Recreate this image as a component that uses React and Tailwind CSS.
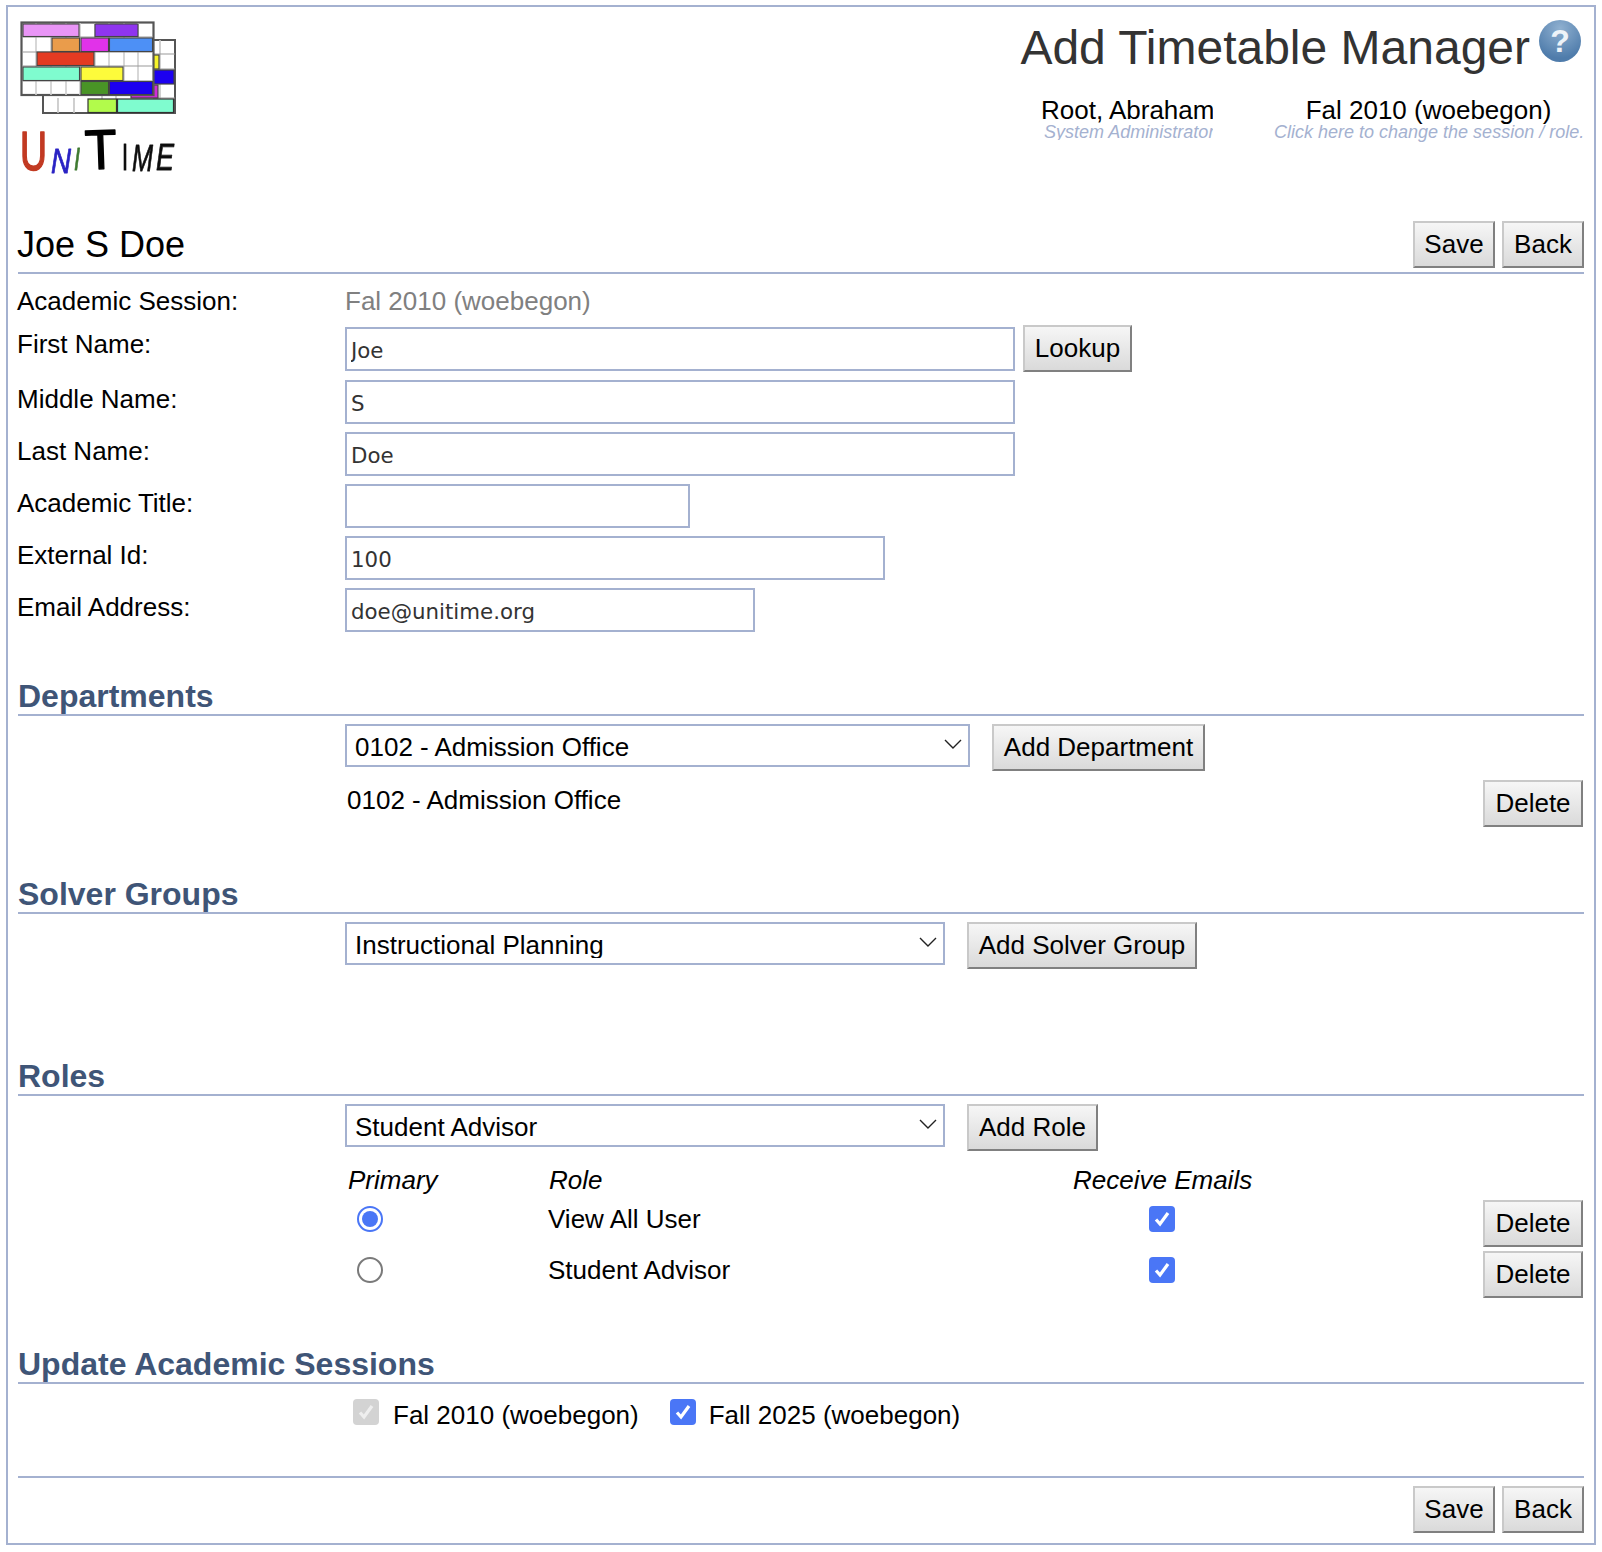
import React from 'react';

const SANS = 'font-["Liberation_Sans",Arial,sans-serif]';

const Btn = ({ children, className = '' }) => (
  <button
    type="button"
    className={`h-[47px] shrink-0 border-2 border-t-[#c9c9c9] border-l-[#c9c9c9] border-r-[#808080] border-b-[#808080] bg-gradient-to-b from-[#f6f6f6] to-[#dadada] pb-[1px] text-[26px] leading-none text-black ${className}`}
  >
    {children}
  </button>
);

const Field = ({ label, value = '', width, height = 'h-[52px]', top = 'pt-[4px]', children }) => (
  <div className={`grid grid-cols-[327px_1fr] ${height} items-start`}>
    <div className={`${top} -ml-[1px] text-[26px] leading-[30px]`}>{label}</div>
    <div className="flex items-center gap-2">
      <input
        type="text"
        defaultValue={value}
        className={`${width} h-[44px] border-2 border-[#a4b1d0] pl-[4px] pt-[2px] font-["DejaVu_Sans",sans-serif] text-[21.33px] text-[#333] outline-none`}
      />
      {children}
    </div>
  </div>
);

const Section = ({ title, className = '', children }) => (
  <section className={className}>
    <h2 className="flex h-[44px] items-end border-b-2 border-[#a4b1d0] text-[32px] font-bold leading-[36px] text-[#3f5577]">
      {title}
    </h2>
    {children}
  </section>
);

const Dropdown = ({ value, width }) => (
  <div className={`relative ${width}`}>
    <select
      defaultValue={value}
      className="h-[43px] w-full appearance-none border-2 border-[#a4b1d0] bg-white pl-[8px] pt-[2px] text-[26px] leading-none text-black outline-none"
    >
      <option>{value}</option>
    </select>
    <svg className="pointer-events-none absolute right-[8px] top-[15px]" width="18" height="11" viewBox="0 0 18 11" fill="none">
      <path d="M1 1l8 8 8-8" stroke="#222" strokeWidth="1.4" />
    </svg>
  </div>
);

const CheckBox = ({ disabled = false, className = '' }) => (
  <span
    className={`flex h-[26px] w-[26px] shrink-0 items-center justify-center rounded-[4px] ${disabled ? 'bg-[#d3d3d3]' : 'bg-[#4a76f6]'} ${className}`}
  >
    <svg width="20" height="20" viewBox="0 0 20 20" fill="none">
      <path d="M4 10.5l4 4.5 8-11" stroke={disabled ? '#eeeeee' : '#fff'} strokeWidth="3.2" />
    </svg>
  </span>
);

const Radio = ({ checked = false }) =>
  checked ? (
    <span className="mt-[6px] ml-[12px] flex h-[26px] w-[26px] items-center justify-center rounded-full border-2 border-[#4a76f6]">
      <span className="h-[16px] w-[16px] rounded-full bg-[#4a76f6]" />
    </span>
  ) : (
    <span className="mt-[6px] ml-[12px] block h-[26px] w-[26px] rounded-full border-2 border-[#7a7a7a]" />
  );

const Logo = () => (
  <svg width="160" height="160" viewBox="18 18 160 160">
    <defs>
      <filter id="soft" x="-5%" y="-5%" width="110%" height="110%">
        <feGaussianBlur stdDeviation="0.5" />
      </filter>
    </defs>
    <g filter="url(#soft)">
      {/* back grid */}
      <rect x="43" y="38" width="132" height="73" fill="#fff" stroke="#555" strokeWidth="2" />
      {[160, 102, 116].map((x) => (
        <path key={x} d={`M${x} 38v73`} stroke="#c4c4c4" strokeWidth="1.6" />
      ))}
      {[58, 74].map((x) => (
        <path key={x} d={`M${x} 96v15`} stroke="#c4c4c4" strokeWidth="1.6" />
      ))}
      <path d="M153 52h22M153 67h22M153 96h22" stroke="#999" strokeWidth="1.2" />
      <rect x="153" y="53" width="6" height="14" fill="#f6f32a" stroke="#444" strokeWidth="1.2" />
      <rect x="153" y="68" width="21" height="14" fill="#1c00f0" stroke="#444" strokeWidth="1.2" />
      <rect x="131" y="83" width="27" height="13" fill="#d02bd8" stroke="#444" strokeWidth="1.2" />
      <rect x="88" y="97" width="28.5" height="13.5" fill="#b2fb4b" stroke="#333" strokeWidth="1.2" />
      <rect x="117.5" y="97" width="56" height="13.5" fill="#7ffccf" stroke="#333" strokeWidth="1.2" />
      {/* front grid */}
      <rect x="21.5" y="20.5" width="132" height="72.5" fill="#fff" stroke="#555" strokeWidth="2.2" />
      {[36, 51, 66, 80, 95, 109, 124, 138].map((x) => (
        <path key={x} d={`M${x} 21v72`} stroke="#cdcdcd" strokeWidth="1.6" />
      ))}
      {[35, 50, 64, 79].map((y) => (
        <path key={y} d={`M22 ${y}h131`} stroke="#999" strokeWidth="1.2" />
      ))}
      <rect x="23" y="22" width="56" height="12.5" fill="#e995f6" stroke="#444" strokeWidth="1.1" />
      <rect x="95" y="22" width="43" height="12.5" fill="#8f35ef" stroke="#444" strokeWidth="1.1" />
      <rect x="52" y="36" width="27.5" height="13.5" fill="#ea9c4b" stroke="#444" strokeWidth="1.1" />
      <rect x="81" y="36" width="27.5" height="13.5" fill="#e133e9" stroke="#444" strokeWidth="1.1" />
      <rect x="109.5" y="36" width="43" height="13.5" fill="#4e90f6" stroke="#444" strokeWidth="1.1" />
      <rect x="37" y="50" width="57" height="13.5" fill="#e43a22" stroke="#444" strokeWidth="1.1" />
      <rect x="23" y="65" width="56.5" height="13.5" fill="#7ffccf" stroke="#444" strokeWidth="1.1" />
      <rect x="81" y="65" width="42" height="13.5" fill="#fdfb3b" stroke="#444" strokeWidth="1.1" />
      <rect x="81" y="79.5" width="27.5" height="13" fill="#4a9428" stroke="#444" strokeWidth="1.1" />
      <rect x="109.5" y="79.5" width="43" height="13" fill="#1c00f0" stroke="#444" strokeWidth="1.1" />
    </g>
    <g fontFamily='"Liberation Sans", sans-serif' filter="url(#soft)" strokeLinejoin="round">
      <text x="20" y="168" fontSize="56" fill="#c23a22" stroke="#c23a22" strokeWidth="1.6" textLength="27" lengthAdjust="spacingAndGlyphs">U</text>
      <text x="51" y="171" fontSize="35" fill="#2a22c4" stroke="#2a22c4" strokeWidth="0.8" textLength="20" lengthAdjust="spacingAndGlyphs" fontStyle="italic">N</text>
      <text x="74" y="168" fontSize="31" fill="#3f7a30" stroke="#3f7a30" strokeWidth="0.8" textLength="6" lengthAdjust="spacingAndGlyphs" fontStyle="italic">I</text>
      <text x="85" y="167" fontSize="56" fill="#000" stroke="#000" strokeWidth="1.4" textLength="32" lengthAdjust="spacingAndGlyphs" transform="rotate(-2 100 150)">T</text>
      <text x="122" y="168" fontSize="37" fill="#111" stroke="#111" strokeWidth="1" textLength="6" lengthAdjust="spacingAndGlyphs">I</text>
      <text x="132" y="169" fontSize="37" fill="#111" stroke="#111" strokeWidth="0.8" textLength="21" lengthAdjust="spacingAndGlyphs" fontStyle="italic">M</text>
      <text x="156" y="168" fontSize="36" fill="#111" stroke="#111" strokeWidth="0.8" textLength="18" lengthAdjust="spacingAndGlyphs" fontStyle="italic">E</text>
    </g>
  </svg>
);

const HelpIcon = () => (
  <span className='mb-[14px] ml-[9px] flex h-[42px] w-[42px] items-center justify-center rounded-full bg-[radial-gradient(circle_at_50%_20%,#8fb0d0,#4f7cab_75%)] font-["Liberation_Sans",sans-serif] text-[32px] font-bold leading-none text-[#eef3f8]'>
    ?
  </span>
);

export default function App() {
  return (
    <div className={`h-[1552px] w-[1602px] bg-white pt-[5px] pl-[6px] ${SANS} text-black`}>
      <div className="h-[1540px] w-[1590px] border-2 border-[#a4b1d0] px-[10px]">
        {/* header */}
        <header className="flex h-[214px] justify-between pt-[13px]">
          <Logo />
          <div className="flex flex-col items-end pr-[1px]">
            <div className="mr-[2px] flex items-center">
              <h1 className="text-[48px] leading-[56px] text-[#333]">Add Timetable Manager</h1>
              <HelpIcon />
            </div>
            <div className="mt-[20px] flex gap-[61px]">
              <div className="w-[173px] overflow-hidden whitespace-nowrap">
                <div className="pl-[1px] text-[26px] leading-[28px]">Root, Abraham</div>
                <div className="pl-[4px] text-[18px] italic leading-[16px] text-[#a4b1d0]">System Administrator</div>
              </div>
              <div className="w-[309px] whitespace-nowrap text-center">
                <div className="text-[26px] leading-[28px]">Fal 2010 (woebegon)</div>
                <div className="text-[18px] italic leading-[16px] text-[#a4b1d0]">Click here to change the session / role.</div>
              </div>
            </div>
          </div>
        </header>

        <div className="flex h-[53px] items-start justify-between border-b-2 border-[#a4b1d0]">
          <div className="-ml-[1px] pt-[2px] text-[36px] leading-[44px]">Joe S Doe</div>
          <div className="flex gap-[7px]">
            <Btn className="w-[82px]">Save</Btn>
            <Btn className="w-[82px]">Back</Btn>
          </div>
        </div>

        {/* manager details */}
        <div className="grid h-[52px] grid-cols-[327px_1fr] pt-[12px] text-[26px] leading-[30px]">
          <div className="-ml-[1px]">Academic Session:</div>
          <div className="text-[#808080]">Fal 2010 (woebegon)</div>
        </div>
        <Field label="First Name:" value="Joe" width="w-[670px]" height="h-[54px]" top="pt-[3px]">
          <Btn className="w-[109px] -mt-[1px]">Lookup</Btn>
        </Field>
        <Field label="Middle Name:" value="S" width="w-[670px]" />
        <Field label="Last Name:" value="Doe" width="w-[670px]" />
        <Field label="Academic Title:" width="w-[345px]" />
        <Field label="External Id:" value="100" width="w-[540px]" />
        <Field label="Email Address:" value="doe@unitime.org" width="w-[410px]" />

        <Section title="Departments" className="mt-[32px]">
          <div className="mt-[8px] flex gap-[22px] pl-[327px]">
            <Dropdown value="0102 - Admission Office" width="w-[625px]" />
            <Btn className="w-[213px]">Add Department</Btn>
          </div>
          <div className="mt-[9px] flex items-start justify-between pr-[1px] pl-[329px]">
            <div className="pt-[5px] text-[26px] leading-[30px]">0102 - Admission Office</div>
            <Btn className="w-[100px]">Delete</Btn>
          </div>
        </Section>

        <Section title="Solver Groups" className="mt-[43px]">
          <div className="mt-[8px] flex gap-[22px] pl-[327px]">
            <Dropdown value="Instructional Planning" width="w-[600px]" />
            <Btn className="w-[230px]">Add Solver Group</Btn>
          </div>
        </Section>

        <Section title="Roles" className="mt-[83px]">
          <div className="mt-[8px] flex gap-[22px] pl-[327px]">
            <Dropdown value="Student Advisor" width="w-[600px]" />
            <Btn className="w-[131px]">Add Role</Btn>
          </div>
          <div className="mt-[14px] pr-[1px] pl-[327px]">
            <div className="grid h-[35px] grid-cols-[203px_525px_180px_1fr] text-[26px] italic leading-[30px]">
              <div className="pl-[3px]">Primary</div>
              <div className="pl-[1px]">Role</div>
              <div>Receive Emails</div>
            </div>
            {['View All User', 'Student Advisor'].map((role, i) => (
              <div key={role} className="grid h-[51px] grid-cols-[203px_525px_180px_1fr] items-start text-[26px] leading-[30px]">
                <Radio checked={i === 0} />
                <div className="pt-[4px]">{role}</div>
                <div className="flex justify-center pt-[6px]">
                  <CheckBox className="-ml-[2px]" />
                </div>
                <div className="flex justify-end">
                  <Btn className="w-[100px]">Delete</Btn>
                </div>
              </div>
            ))}
          </div>
        </Section>

        <Section title="Update Academic Sessions" className="mt-[38px]">
          <div className="mt-[15px] flex h-[77px] items-start pl-[335px] text-[26px] leading-[30px]">
            <CheckBox disabled />
            <span className="mt-[1px] ml-[14px]">Fal 2010 (woebegon)</span>
            <CheckBox className="ml-[31px]" />
            <span className="mt-[1px] ml-[13px]">Fall 2025 (woebegon)</span>
          </div>
        </Section>

        <div className="flex justify-end gap-[7px] border-t-2 border-[#a4b1d0] pt-[8px]">
          <Btn className="w-[82px]">Save</Btn>
          <Btn className="w-[82px]">Back</Btn>
        </div>
      </div>
    </div>
  );
}
